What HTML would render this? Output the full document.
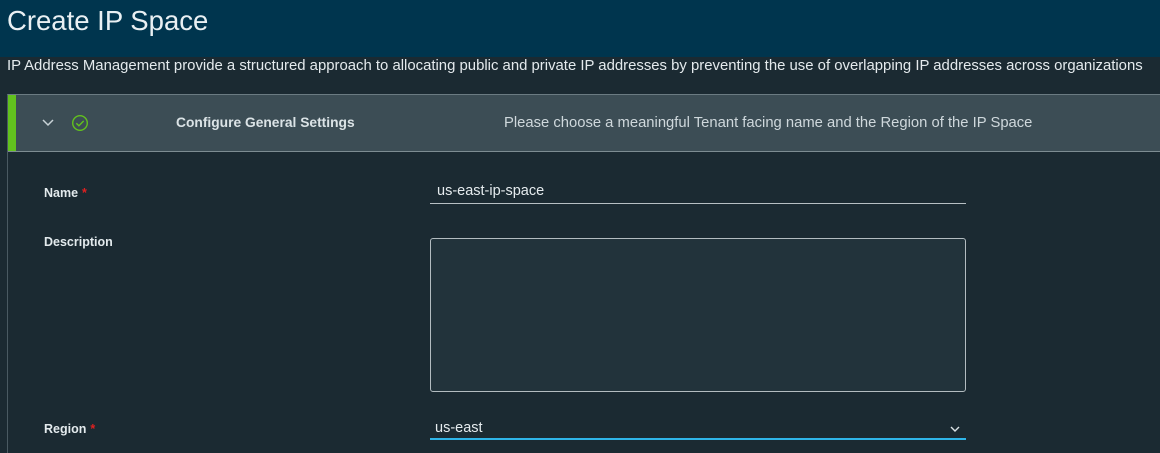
<!DOCTYPE html>
<html style="overflow:hidden;height:453px"><head><style>
*{box-sizing:border-box;margin:0;padding:0}
body{width:1160px;height:453px;overflow:hidden;background:#1b2a32;font-family:"Liberation Sans",sans-serif;color:#e8eef0;position:relative}
.hdr{position:absolute;left:0;top:0;width:1160px;height:57px;background:#00354e}
.hdr h1{position:absolute;left:7px;top:5px;font-size:27.5px;font-weight:normal;color:#e9f0f3}
.sub{position:absolute;left:7px;top:58px;font-size:14.9px;color:#e4eaed;white-space:nowrap}
.panel{position:absolute;left:7px;top:94px;width:1153px;height:359px;border-left:1px solid #4a5a62;border-top:1px solid #6b7b82}
.acc{position:absolute;left:8px;top:95px;width:1152px;height:57px;background:#3c4d55;border-bottom:1px solid #7d8c92}
.bar{position:absolute;left:0;top:0;width:8px;height:56px;background:#62c11e}
.t1{position:absolute;left:168px;top:20px;font-size:13.8px;font-weight:bold;color:#dbe3e6}
.t2{position:absolute;left:496px;top:20px;font-size:14.8px;color:#cfd8dc;white-space:nowrap}
.lbl{position:absolute;left:44px;font-size:12.5px;font-weight:bold;color:#e3eaed}
.req{color:#e02020;margin-left:4px}
.inp{position:absolute;left:430px;width:536px;border-bottom:1px solid #b7c0c4;font-size:14.5px;color:#e5ebee}
.ta{position:absolute;left:430px;top:238px;width:536px;height:154px;border:1px solid #b3bcc0;border-radius:3px;background:#22333b}
</style></head><body>
<div class="hdr"><h1>Create IP Space</h1></div>
<div class="sub">IP Address Management provide a structured approach to allocating public and private IP addresses by preventing the use of overlapping IP addresses across organizations</div>
<div class="panel"></div>
<div class="acc"><div class="bar"></div>
<svg style="position:absolute;left:34px;top:23px" width="12" height="10" viewBox="0 0 12 10"><path d="M1 2l5 5 5-5" stroke="#c8d2d6" stroke-width="1.5" fill="none"/></svg>
<svg style="position:absolute;left:63px;top:19px" width="18" height="18" viewBox="0 0 18 18"><circle cx="9" cy="9" r="7.3" stroke="#62c11e" stroke-width="1.4" fill="none"/><path d="M5.3 9.2l2.6 2.6 4.8-4.9" stroke="#62c11e" stroke-width="1.4" fill="none"/></svg>
<div class="t1">Configure General Settings</div>
<div class="t2">Please choose a meaningful Tenant facing name and the Region of the IP Space</div>
</div>
<div class="lbl" style="top:186px">Name<span class="req">*</span></div>
<div class="inp" style="top:183px;height:21px;padding-left:7px">us-east-ip-space</div>
<div class="lbl" style="top:235px">Description</div>
<div class="ta"></div>
<div class="lbl" style="top:422px">Region<span class="req">*</span></div>
<div class="inp" style="top:420px;height:20px;padding-left:5px;border-bottom:2px solid #2fb5e8">us-east
<svg style="position:absolute;right:6px;top:5px" width="10" height="8" viewBox="0 0 10 8"><path d="M1 2l4 4 4-4" stroke="#dbe3e6" stroke-width="1.4" fill="none"/></svg></div>
</body></html>
